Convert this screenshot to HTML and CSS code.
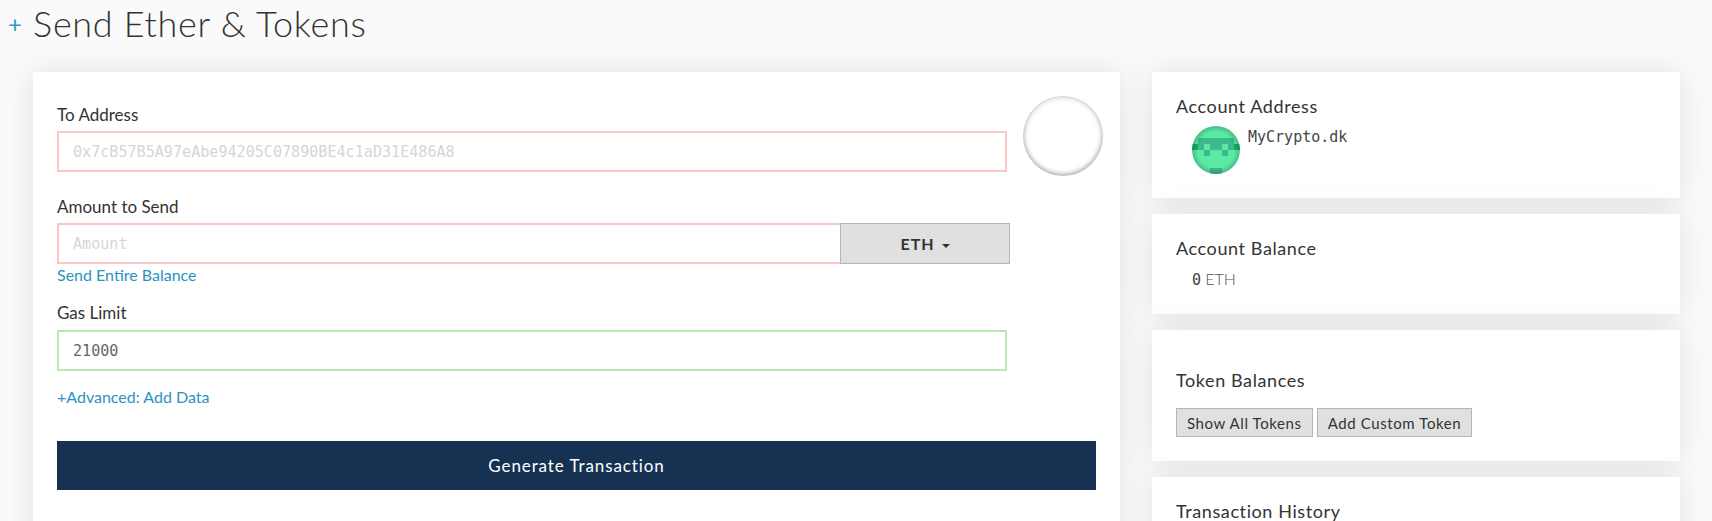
FILE: index.html
```html
<!DOCTYPE html>
<html lang="en">
<head>
    <meta charset="UTF-8">
    <title>Send Ether &amp; Tokens</title>
    <link rel="stylesheet" href="styles.css">
</head>
<body>
    <h1 class="page-title"><span class="plus">+</span> Send Ether &amp; Tokens</h1>

    <main class="columns">
        <section class="card send-form">
            <div class="to-row">
                <div class="to-field">
                    <label>To Address</label>
                    <input class="bad" type="text" placeholder="0x7cB57B5A97eAbe94205C07890BE4c1aD31E486A8">
                </div>
                <div class="identicon-empty"></div>
            </div>

            <label>Amount to Send</label>
            <div class="amount-group">
                <input class="bad" type="text" placeholder="Amount">
                <button class="unit-btn">ETH <span class="caret"></span></button>
            </div>
            <a class="link send-all" href="#">Send Entire Balance</a>

            <label class="gas-label">Gas Limit</label>
            <input class="good" type="text" value="21000">

            <a class="link advanced" href="#">+Advanced: Add Data</a>

            <button class="generate-btn">Generate Transaction</button>
        </section>

        <aside class="sidebar">
            <section class="card">
                <h5>Account Address</h5>
                <div class="address-row">
                    <svg class="avatar" viewBox="0 0 8 8">
                        <defs>
                            <radialGradient id="avatar-shade">
                                <stop offset="0.75" stop-color="#000" stop-opacity="0"/>
                                <stop offset="1" stop-color="#000" stop-opacity="0.2"/>
                            </radialGradient>
                        </defs>
                        <rect width="8" height="8" fill="#5ce9a6"/>
                        <path d="M1 2h6v1H1zM1 3h1v1H1zM3 3h2v1H3zM6 3h1v1H6zM2 4h1v1H2zM5 4h1v1H5zM3 7h2v1H3z" fill="#3cba8d"/>
                        <path d="M0 3h1v1H0zM7 3h1v1H7z" fill="#12b45e"/>
                        <circle cx="4" cy="4" r="4" fill="url(#avatar-shade)"/>
                    </svg>
                    <span class="mono">MyCrypto.dk</span>
                </div>
            </section>

            <section class="card">
                <h5>Account Balance</h5>
                <p class="balance"><span class="mono">0</span> <span class="unit">ETH</span></p>
            </section>

            <section class="card">
                <h5 class="tokens-title">Token Balances</h5>
                <div class="token-btns">
                    <button>Show All Tokens</button>
                    <button>Add Custom Token</button>
                </div>
            </section>

            <section class="card">
                <h5>Transaction History</h5>
            </section>
        </aside>
    </main>
</body>
</html>
```

FILE: styles.css
```css
* {
    margin: 0;
    padding: 0;
    box-sizing: border-box;
    font-family: 'Lato', sans-serif;
}

html, body {
    height: 100vh;
    overflow: hidden;
}

body {
    background-color: #fafafa;
    color: #333;
}

.page-title {
    font-size: 36px;
    font-weight: 300;
    line-height: 46px;
    letter-spacing: 0.7px;
    padding-left: 8px;
    margin-bottom: 25px;
}

.page-title .plus {
    color: #2a9bc4;
    font-size: 24px;
    font-weight: 400;
    vertical-align: 4px;
}

.columns {
    display: grid;
    grid-template-columns: 1087px 528px;
    gap: 32px;
    padding-left: 33px;
    align-items: start;
}

.card {
    background-color: #fff;
    padding: 24px;
    box-shadow: 0 1px 30px rgba(0, 0, 0, 0.1);
}

.send-form {
    padding-bottom: 80px;
}

.sidebar {
    display: flex;
    flex-direction: column;
    gap: 16px;
}

label {
    display: block;
    font-size: 17px;
    line-height: 20px;
    color: #333;
    margin-bottom: 6px;
}

input {
    display: block;
    width: 100%;
    height: 41px;
    padding: 0 14px;
    border: 2px solid #ccc;
    font-family: 'DejaVu Sans Mono', monospace;
    font-size: 15.1px;
    color: #666;
    outline: none;
}

input::placeholder {
    color: #d6d6d6;
    font-family: 'DejaVu Sans Mono', monospace;
}

input.bad {
    border-color: #fcc6c6;
}

input.good {
    width: 950px;
    border-color: #b8e8af;
}

.to-row {
    display: flex;
    align-items: flex-start;
    gap: 16px;
    margin-bottom: 21px;
}

.to-field {
    flex: none;
    width: 950px;
    padding-top: 9px;
}

.identicon-empty {
    flex: none;
    width: 80px;
    height: 80px;
    border-radius: 50%;
    background-color: #fff;
    box-shadow: inset 0 0 6px rgba(0, 0, 0, 0.25), inset 0 -2px 4px rgba(0, 0, 0, 0.2);
}

.amount-group {
    display: flex;
    width: 953px;
}

.amount-group input {
    flex: 1;
    border-right: none;
}

.unit-btn {
    width: 170px;
    height: 41px;
    background-color: #e0e0e0;
    border: 1px solid #b5b5b5;
    font-size: 16px;
    font-weight: 700;
    letter-spacing: 1px;
    color: #333;
}

.caret {
    display: inline-block;
    margin-left: 2px;
    vertical-align: middle;
    border-top: 4px solid #333;
    border-left: 4px solid transparent;
    border-right: 4px solid transparent;
}

.link {
    display: block;
    font-size: 16px;
    line-height: 20px;
    color: #2a93bf;
    text-decoration: none;
}

.send-all {
    margin-top: 1px;
}

.gas-label {
    margin-top: 18px;
    margin-bottom: 7px;
}

.advanced {
    margin-top: 16px;
}

.generate-btn {
    display: block;
    width: 100%;
    height: 49px;
    margin-top: 34px;
    background-color: #163151;
    border: none;
    color: #fff;
    font-size: 17px;
    letter-spacing: 0.9px;
}

h5 {
    font-size: 18px;
    font-weight: 400;
    line-height: 20px;
    letter-spacing: 0.6px;
    color: #333;
}

.address-row {
    display: flex;
    align-items: flex-start;
    gap: 8px;
    margin-top: 10px;
    padding-left: 16px;
}

.avatar {
    width: 48px;
    height: 48px;
    border-radius: 50%;
}

.mono {
    font-family: 'DejaVu Sans Mono', monospace;
    font-size: 15px;
    color: #444;
}

.address-row .mono {
    line-height: 22px;
}

.balance {
    margin-top: 11px;
    padding-left: 16px;
    line-height: 20px;
}

.balance .unit {
    font-size: 16px;
    font-weight: 300;
    color: #555;
}

.tokens-title {
    margin-top: 16px;
}

.token-btns {
    display: flex;
    gap: 4px;
    margin-top: 18px;
}

.token-btns button {
    height: 29px;
    padding: 0 10px;
    background-color: #e0e0e0;
    border: 1px solid #b5b5b5;
    font-size: 15px;
    letter-spacing: 0.6px;
    color: #333;
}
```
